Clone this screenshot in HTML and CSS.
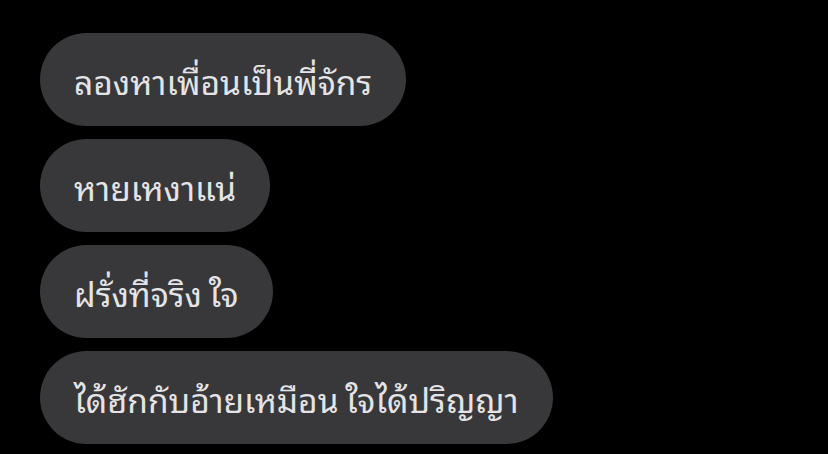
FILE: index.html
```html
<!DOCTYPE html>
<html lang="th">
<head>
<meta charset="utf-8">
<link rel="stylesheet" href="styles.css">
</head>
<body>
<div class="chat">
  <div class="bubble">ลองหาเพื่อนเป็นพี่จักร</div>
  <div class="bubble">หายเหงาแน่</div>
  <div class="bubble">ฝรั่งที่จริง ใจ</div>
  <div class="bubble">ได้ฮักกับอ้ายเหมือน ใจได้ปริญญา</div>
</div>
</body>
</html>
```
FILE: styles.css
```css
html, body {
  margin: 0;
  padding: 0;
  background: #000;
}
.chat {
  display: flex;
  flex-direction: column;
  align-items: flex-start;
  gap: 13px;
  padding: 33px 0 0 40px;
}
.bubble {
  box-sizing: border-box;
  height: 93px;
  display: flex;
  align-items: center;
  padding: 0 34px;
  border-radius: 47px;
  background: #38383b;
  color: #e4e4e6;
  font-family: "Noto Sans Thai Looped", "Liberation Sans", sans-serif;
  font-size: 33.5px;
  word-spacing: -2px;
  white-space: nowrap;
}
```
